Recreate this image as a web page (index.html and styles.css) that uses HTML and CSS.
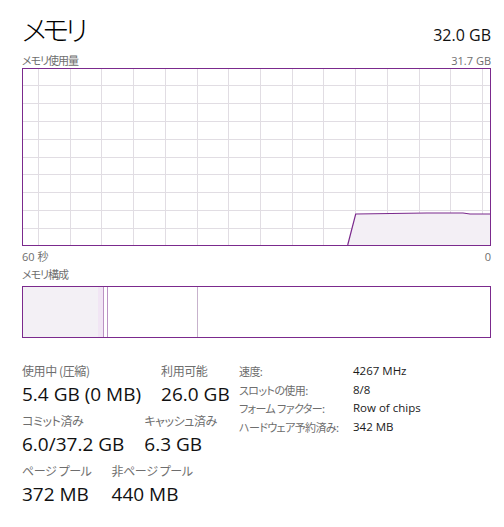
FILE: index.html
```html
<!DOCTYPE html>
<html lang="ja">
<head>
<meta charset="utf-8">
<link rel="stylesheet" href="styles.css">
</head>
<body>
<div class="page">
  <div class="header">
    <h1 class="title">メモリ</h1>
    <div class="total">32.0 GB</div>
  </div>
  <div class="caption-row">
    <span>メモリ使用量</span>
    <span class="latin">31.7 GB</span>
  </div>
  <div class="graph">
    <svg width="469" height="178" viewBox="0 0 469 178">
      <g class="grid">
        <path d="M16.5 0V178M48.5 0V178M79.5 0V178M111.5 0V178M143.5 0V178M175.5 0V178M206.5 0V178M238.5 0V178M270.5 0V178M301.5 0V178M333.5 0V178M365.5 0V178M397.5 0V178M428.5 0V178M460.5 0V178"/>
        <path d="M0 17.5H469M0 35.5H469M0 53.5H469M0 71.5H469M0 89.5H469M0 106.5H469M0 124.5H469M0 142.5H469M0 160.5H469"/>
      </g>
      <polygon class="area" points="325.7,177 333.7,146 404.7,145 441,145 448,146 469,146 469,177"/>
      <polyline class="line" points="325.7,177 333.7,146 404.7,145 441,145 448,146 469,146"/>
      <rect class="frame" x="0.5" y="0.5" width="468" height="177"/>
    </svg>
  </div>
  <div class="axis-row">
    <span>60 秒</span>
    <span>0</span>
  </div>
  <div class="caption-row comp-caption">
    <span>メモリ構成</span>
  </div>
  <div class="composition">
    <div class="seg seg-inuse"></div>
    <div class="seg seg-modified"></div>
    <div class="seg seg-standby"></div>
    <div class="seg seg-free"></div>
  </div>

  <div class="stats">
    <div class="stat-col">
      <div class="stat-row">
        <div class="stat"><div class="label">使用中 (圧縮)</div><div class="value">5.4 GB (0 MB)</div></div>
        <div class="stat"><div class="label">利用可能</div><div class="value">26.0 GB</div></div>
      </div>
      <div class="stat-row">
        <div class="stat"><div class="label">コミット済み</div><div class="value">6.0/37.2 GB</div></div>
        <div class="stat"><div class="label">キャッシュ済み</div><div class="value">6.3 GB</div></div>
      </div>
      <div class="stat-row">
        <div class="stat"><div class="label">ページ プール</div><div class="value">372 MB</div></div>
        <div class="stat"><div class="label">非ページ プール</div><div class="value">440 MB</div></div>
      </div>
    </div>
    <dl class="props">
      <dt>速度:</dt><dd>4267 MHz</dd>
      <dt>スロットの使用:</dt><dd>8/8</dd>
      <dt>フォーム ファクター:</dt><dd>Row of chips</dd>
      <dt>ハードウェア予約済み:</dt><dd>342 MB</dd>
    </dl>
  </div>
</div>
</body>
</html>
```

FILE: styles.css
```css
* { box-sizing: border-box; }
html, body { margin: 0; padding: 0; background: #fff; }
body {
  font-family: "Open Sans", "Noto Sans CJK JP", sans-serif;
  font-feature-settings: "palt";
  color: #1a1a1a;
}
.page {
  width: 504px;
  padding: 9px 13px 0 22px;
}
.header {
  display: flex;
  justify-content: space-between;
  align-items: baseline;
  height: 44px;
}
.title {
  margin: 0;
  font-family: "Noto Sans CJK JP", sans-serif;
  font-weight: 300;
  font-size: 28px;
  line-height: 40px;
  letter-spacing: -4px;
  color: #000;
}
.total {
  font-size: 16px;
  color: #111;
}
.caption-row {
  display: flex;
  justify-content: space-between;
  align-items: baseline;
  height: 15px;
  font-size: 11px;
  line-height: 15px;
  color: #6e6e6e;
}
.caption-row span:first-child {
  font-family: "Noto Sans CJK JP", sans-serif;
  letter-spacing: -1px;
}
.graph {
  height: 178px;
}
.graph svg { display: block; }
.grid path { stroke: #e1dde3; stroke-width: 1; fill: none; }
.area { fill: #f3eff5; }
.line { fill: none; stroke: #7b2a8d; stroke-width: 1.2; }
.frame { fill: none; stroke: #7b2a8d; stroke-width: 1; }
.axis-row {
  display: flex;
  justify-content: space-between;
  font-size: 11px;
  line-height: 15px;
  height: 18px;
  padding-top: 3px;
  color: #6e6e6e;
}
.comp-caption { height: 22px; line-height: 20px; }
.composition {
  display: flex;
  height: 52px;
  border: 1px solid #7b2a8d;
}
.seg { height: 100%; }
.seg-inuse { width: 75px; background: #f3f0f5; }
.seg-modified { width: 6px; background: #f1e5f4; border-right: 1px solid #bb93c4; }
.seg-standby { width: 4px; border-right: 1px solid #bb93c4; }
.seg-free { width: 90px; border-right: 1px solid #c7b2cc; }

.stats {
  display: flex;
  align-items: flex-start;
  margin-top: 24px;
}
.stat-col {
  width: 217px;
}
.stat-row {
  display: flex;
  gap: 20px;
  margin-bottom: 4px;
}
.label {
  font-family: "Noto Sans CJK JP", sans-serif;
  font-size: 12px;
  line-height: 18px;
  letter-spacing: -0.4px;
  color: #6e6e6e;
}
.value {
  font-size: 19px;
  line-height: 28px;
  color: #111;
  white-space: nowrap;
}
.props {
  margin: 0;
  display: grid;
  grid-template-columns: 114px auto;
  grid-auto-rows: 18.5px;
  font-size: 11.5px;
  line-height: 18.5px;
}
.props dt {
  font-family: "Noto Sans CJK JP", sans-serif;
  font-size: 11px;
  letter-spacing: -0.6px;
  color: #6e6e6e;
  white-space: nowrap;
}
.props dd {
  margin: 0;
  color: #1a1a1a;
}
```
